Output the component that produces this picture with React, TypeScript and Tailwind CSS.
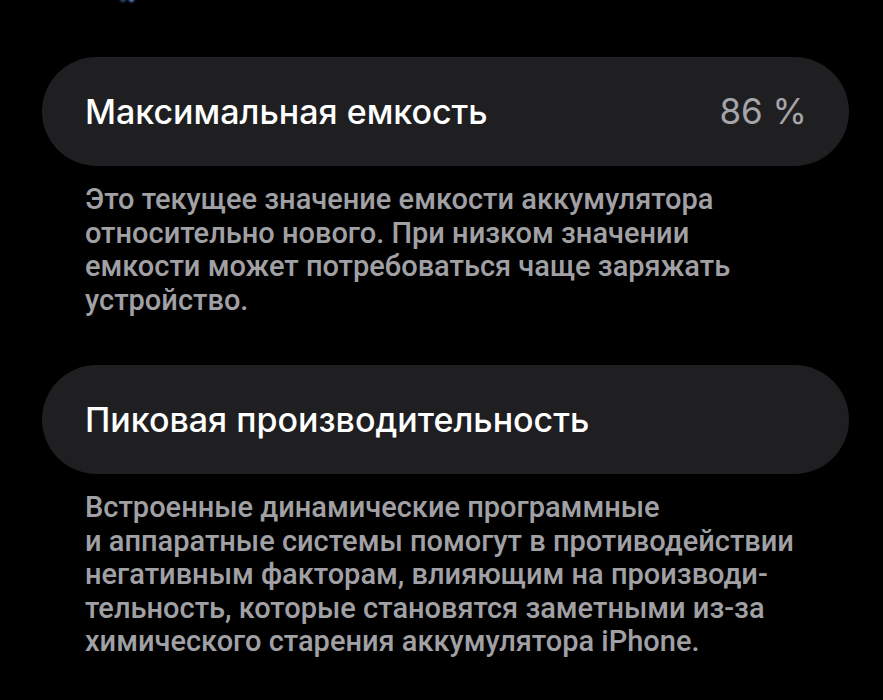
const sections = [
  {
    title: "Максимальная емкость",
    value: "86 %",
    lines: [
      "Это текущее значение емкости аккумулятора",
      "относительно нового. При низком значении",
      "емкости может потребоваться чаще заряжать",
      "устройство.",
    ],
  },
  {
    title: "Пиковая производительность",
    value: null,
    lines: [
      "Встроенные динамические программные",
      "и аппаратные системы помогут в противодействии",
      "негативным факторам, влияющим на производи-",
      "тельность, которые становятся заметными из-за",
      "химического старения аккумулятора iPhone.",
    ],
  },
];

export default function App() {
  return (
    <div className="relative min-h-[700px] w-full overflow-hidden bg-black pt-[57px] font-['Inter','Noto_Sans',sans-serif]">
      {/* cut-off link peeking in at the top edge */}
      <div className="absolute left-[120px] top-[-4px] flex gap-[3px]">
        <span className="h-[6px] w-[6px] rounded-full bg-[#2b4f7a] blur-[1px]" />
        <span className="h-[6px] w-[5px] rounded-full bg-[#5b8ccf] blur-[1px]" />
      </div>

      <div className="flex flex-col">
        {sections.map((s, i) => (
          <section key={s.title} className={i === 0 ? "" : "mt-[48px]"}>
            <div className="mr-[34px] ml-[42px] flex h-[109px] items-center justify-between rounded-full bg-[#1f1f21] pl-[43px] pr-[42px]">
              <h2 className="text-[34px] font-medium text-white">{s.title}</h2>
              {s.value && <span className="text-[35px] text-[#a5a5aa]">{s.value}</span>}
            </div>
            <p className="mt-[17px] pl-[85px] font-['Roboto',sans-serif] text-[29px] font-medium leading-[33.5px] text-[#a0a0a5]">
              {s.lines.map((l) => (
                <span key={l} className="block whitespace-nowrap">
                  {l}
                </span>
              ))}
            </p>
          </section>
        ))}
      </div>
    </div>
  );
}
